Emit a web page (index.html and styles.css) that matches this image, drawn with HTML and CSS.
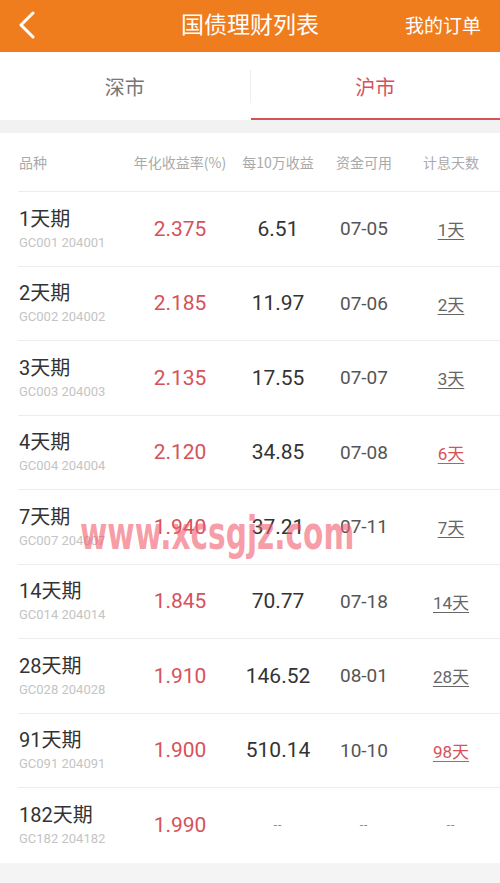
FILE: index.html
```html
<!DOCTYPE html>
<html lang="zh">
<head>
<meta charset="utf-8">
<link rel="stylesheet" href="styles.css">
</head>
<body>
<div class="page">
  <header class="topbar">
    <svg class="back" viewBox="0 0 20 28" width="20" height="28"><path d="M16 2 L4 14 L16 26" fill="none" stroke="#fff" stroke-width="3" stroke-linecap="round" stroke-linejoin="round"/></svg>
    <div class="title">国债理财列表</div>
    <div class="orders">我的订单</div>
  </header>
  <nav class="tabs">
    <div class="tab">深市</div>
    <div class="sep"></div>
    <div class="tab active">沪市</div>
  </nav>
  <div class="gap"></div>
  <section class="table">
    <div class="row head">
      <div class="c name">品种</div>
      <div class="c">年化收益率(%)</div>
      <div class="c">每10万收益</div>
      <div class="c">资金可用</div>
      <div class="c">计息天数</div>
    </div>
    <div class="row">
      <div class="c name"><div class="nm">1天期</div><div class="code">GC001 204001</div></div>
      <div class="c rate">2.375</div><div class="c val">6.51</div><div class="c date">07-05</div><div class="c"><span class="days">1天</span></div>
    </div>
    <div class="row">
      <div class="c name"><div class="nm">2天期</div><div class="code">GC002 204002</div></div>
      <div class="c rate">2.185</div><div class="c val">11.97</div><div class="c date">07-06</div><div class="c"><span class="days">2天</span></div>
    </div>
    <div class="row">
      <div class="c name"><div class="nm">3天期</div><div class="code">GC003 204003</div></div>
      <div class="c rate">2.135</div><div class="c val">17.55</div><div class="c date">07-07</div><div class="c"><span class="days">3天</span></div>
    </div>
    <div class="row">
      <div class="c name"><div class="nm">4天期</div><div class="code">GC004 204004</div></div>
      <div class="c rate">2.120</div><div class="c val">34.85</div><div class="c date">07-08</div><div class="c"><span class="days red">6天</span></div>
    </div>
    <div class="row">
      <div class="c name"><div class="nm">7天期</div><div class="code">GC007 204007</div></div>
      <div class="c rate">1.940</div><div class="c val">37.21</div><div class="c date">07-11</div><div class="c"><span class="days">7天</span></div>
    </div>
    <div class="row">
      <div class="c name"><div class="nm">14天期</div><div class="code">GC014 204014</div></div>
      <div class="c rate">1.845</div><div class="c val">70.77</div><div class="c date">07-18</div><div class="c"><span class="days">14天</span></div>
    </div>
    <div class="row">
      <div class="c name"><div class="nm">28天期</div><div class="code">GC028 204028</div></div>
      <div class="c rate">1.910</div><div class="c val">146.52</div><div class="c date">08-01</div><div class="c"><span class="days">28天</span></div>
    </div>
    <div class="row">
      <div class="c name"><div class="nm">91天期</div><div class="code">GC091 204091</div></div>
      <div class="c rate">1.900</div><div class="c val">510.14</div><div class="c date">10-10</div><div class="c"><span class="days red">98天</span></div>
    </div>
    <div class="row last">
      <div class="c name"><div class="nm">182天期</div><div class="code">GC182 204182</div></div>
      <div class="c rate">1.990</div><div class="c dash">--</div><div class="c dash">--</div><div class="c dash">--</div>
    </div>
  </section>
  <div class="bottom"></div>
  <div class="watermark">www.xcsgjz.com</div>
</div>
</body>
</html>
```
FILE: styles.css
```css
html, body { margin: 0; padding: 0; }
body {
  font-family: Roboto, "Noto Sans CJK SC", sans-serif;
  background: #f4f4f4;
  color: #333;
}
.page { position: relative; width: 500px; height: 883px; overflow: hidden; background: #f4f4f4; }
.topbar {
  height: 52px;
  background: #ef7d1d;
  display: flex;
  align-items: center;
  position: relative;
}
.back { margin-left: 17px; margin-top: -2px; }
.title {
  position: absolute; left: 0; right: 0; text-align: center;
  color: #fff; font-size: 23px; top: 8px; line-height: 30px;
  font-family: "Noto Sans CJK SC", sans-serif;
  pointer-events: none;
}
.orders {
  margin-left: auto; margin-right: 19px; color: #fff; font-size: 19px;
  font-family: "Noto Sans CJK SC", sans-serif; margin-top: -4px;
}
.tabs {
  height: 68px; background: #fff; display: flex; align-items: center;
}
.tab {
  flex: 1; height: 68px; display: flex; align-items: center; justify-content: center;
  font-size: 20px; color: #777; font-family: "Noto Sans CJK SC", sans-serif;
  box-sizing: border-box; padding-top: 0;
}
.tab.active { color: #d6525a; border-bottom: 2px solid #d6525a; padding-top: 2px; }
.sep { width: 1px; height: 33px; background: #eee; }
.gap { height: 13px; background: #f2f2f2; }
.table { background: #fff; padding-left: 18px; }
.row {
  display: grid;
  grid-template-columns: 112px 100px 96px 76px 98px;
  height: 74.5px;
  box-sizing: border-box;
  border-bottom: 1px solid #ececec;
  align-items: center;
}
.row.head { height: 59px; }
.row.last { border-bottom: none; }
.c { text-align: center; }
.c.name { text-align: left; padding-left: 1px; }
.head .c { font-size: 14px; color: #aaa; font-family: "Noto Sans CJK SC", sans-serif; white-space: nowrap; }
.nm { font-size: 20px; color: #333; line-height: 26px; }
.code { font-size: 13px; color: #c4c4c4; line-height: 18px; margin-top: 2px; }
.rate { font-size: 21px; color: #d6525a; }
.val { font-size: 21px; color: #333; }
.date { font-size: 19px; color: #555; }
.days { font-size: 17px; color: #666; text-decoration: underline; text-underline-offset: 3px; }
.days.red { color: #d6525a; }
.dash { font-size: 12px; color: #888; letter-spacing: 1px; }
.bottom { height: 21px; background: #f4f4f4; }
.watermark {
  position: absolute; left: 80px; top: 505px;
  font-size: 47px; font-weight: bold; color: rgba(240, 90, 110, 0.6);
  font-family: "DejaVu Sans", sans-serif;
  transform: scaleX(0.63); transform-origin: left top;
  white-space: nowrap;
  pointer-events: none;
}
```
